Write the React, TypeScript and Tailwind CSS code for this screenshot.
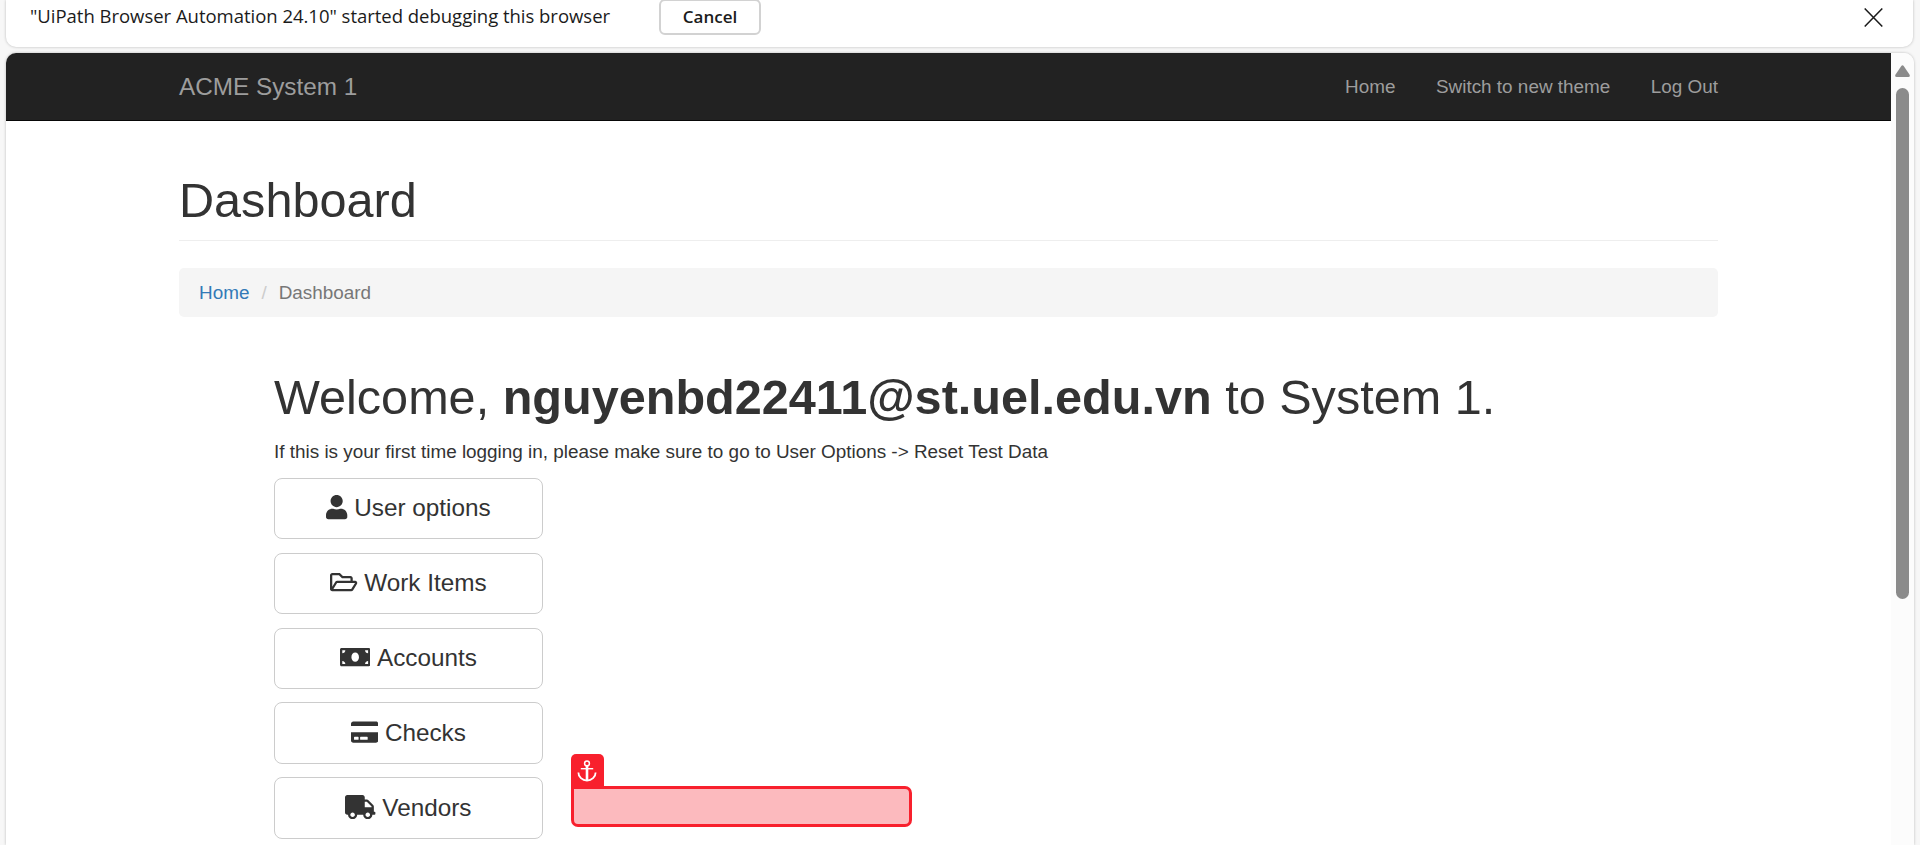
import { FaCreditCard, FaMoneyBill, FaRegFolderOpen, FaTruck, FaUser } from "react-icons/fa";
import type { IconType } from "react-icons";

const actions: { label: string; icon: IconType; width: string }[] = [
  { label: "User options", icon: FaUser, width: "w-[21.3px]" },
  { label: "Work Items", icon: FaRegFolderOpen, width: "w-[27.3px]" },
  { label: "Accounts", icon: FaMoneyBill, width: "w-[30.4px]" },
  { label: "Checks", icon: FaCreditCard, width: "w-[27.3px]" },
  { label: "Vendors", icon: FaTruck, width: "w-[30.4px]" },
];

function InfoBar() {
  return (
    <div className="ml-1.5 flex h-[47px] w-[1907px] shrink-0 items-start rounded-b-[10px] bg-white pl-6 shadow-[0_0_3px_rgba(0,0,0,0.25)]">
      <span className="w-[629px] pt-1 font-['Open_Sans','Noto_Sans',sans-serif] text-[18.5px] leading-6 tracking-[-0.02px] whitespace-nowrap text-[#1b1b1b]">
        "UiPath Browser Automation 24.10" started debugging this browser
      </span>
      <button className="-mt-px flex h-9 w-[102px] items-center justify-center rounded-md border-2 border-[#d2d2d2] bg-white font-['Open_Sans','Noto_Sans',sans-serif] text-[17px] font-semibold text-[#1b1b1b]">
        Cancel
      </button>
      <svg className="mt-2 mr-[30px] ml-auto h-[19px] w-[19px]" viewBox="0 0 19 19" fill="none" stroke="#1b1b1b" strokeWidth="1.5">
        <path d="M.7.5l17.6 18M18.3.5L.7 18.5" />
      </svg>
    </div>
  );
}

function NavBar() {
  return (
    <nav className="flex h-[68px] items-center border-b border-[#080808] bg-[#222] px-[173px] pt-0.5 text-[#9d9d9d]">
      <span className="text-[24.3px]">ACME System 1</span>
      <div className="ml-auto flex gap-[40.5px] text-[18.9px]">
        <span>Home</span>
        <span>Switch to new theme</span>
        <span>Log Out</span>
      </div>
    </nav>
  );
}

function Scrollbar() {
  return (
    <div className="flex w-[23px] flex-col items-center bg-[#fcfcfc] pt-3">
      <svg className="h-3 w-[15px]" viewBox="0 0 15 12" fill="#8b8b8b">
        <path d="M6.3.9Q7.5-.6 8.7.9L14.6 9.7Q15.4 12 13.3 12H1.7Q-.4 12 .4 9.7Z" />
      </svg>
      <div className="mt-[11px] h-[511px] w-[13px] rounded-full bg-[#8b8b8b]" />
    </div>
  );
}

function AnchorIcon() {
  return (
    <svg className="h-[22px] w-5" viewBox="0 0 20 22" fill="none" stroke="currentColor">
      <circle cx="10" cy="3.4" r="2.4" strokeWidth="1.5" />
      <path d="M10 6v14.5" strokeWidth="2.6" />
      <path d="M3.8 8.7h12.4" strokeWidth="1.4" />
      <path d="M1.4 12.4a8.6 8.2 0 0 0 17.2 0" strokeWidth="1.8" />
    </svg>
  );
}

function Target() {
  return (
    <div className="absolute top-[754px] left-[571px]">
      <div className="flex h-8 w-[33px] items-center justify-center rounded-t-[5px] bg-[#f8202d] pt-px pr-px text-white">
        <AnchorIcon />
      </div>
      <div className="h-[41px] w-[341px] rounded-[7px] rounded-tl-none border-3 border-[#f8202d] bg-[#fcbabe]" />
    </div>
  );
}

export default function App() {
  return (
    <div className="relative flex h-[845px] w-[1920px] flex-col overflow-hidden bg-[#f7f7f7] font-['Liberation_Sans',Arial,sans-serif] text-[#333]">
      <InfoBar />
      <div className="mt-1.5 ml-1.5 flex min-h-0 w-[1908px] flex-1 overflow-hidden rounded-t-[10px] bg-white shadow-[0_0_3px_rgba(0,0,0,0.25)]">
        <div className="w-[1885px]">
          <NavBar />
          <main className="px-[173px] pt-[53px]">
            <h1 className="h-[67px] border-b border-[#eee] text-[48.6px] leading-[53px]">Dashboard</h1>
            <ol className="mt-[27px] flex h-[49px] items-center rounded-[5px] bg-[#f5f5f5] pt-px pl-5 text-[18.9px]">
              <li className="text-[#337ab7]">Home</li>
              <li className="px-3 text-[#ccc]">/</li>
              <li className="text-[#777]">Dashboard</li>
            </ol>
            <div className="pt-[54px] pl-[95px]">
              <h1 className="text-[48.6px] leading-[53px] whitespace-nowrap">
                Welcome, <b>nguyenbd22411@st.uel.edu.vn</b> to System 1.
              </h1>
              <p className="mt-[14px] text-[18.9px] leading-[27px]">
                If this is your first time logging in, please make sure to go to User Options -&gt; Reset Test Data
              </p>
              <div className="mt-[13px] flex flex-col gap-[13.65px]">
                {actions.map(({ label, icon: Icon, width }) => (
                  <button
                    key={label}
                    className="flex h-[61.2px] w-[269px] shrink-0 items-center justify-center gap-[6.5px] rounded-lg border border-[#ccc] bg-white text-[24.3px]"
                  >
                    <Icon className={`mb-0.5 h-[24.3px] ${width}`} />
                    {label}
                  </button>
                ))}
              </div>
            </div>
          </main>
        </div>
        <Scrollbar />
      </div>
      <Target />
    </div>
  );
}
